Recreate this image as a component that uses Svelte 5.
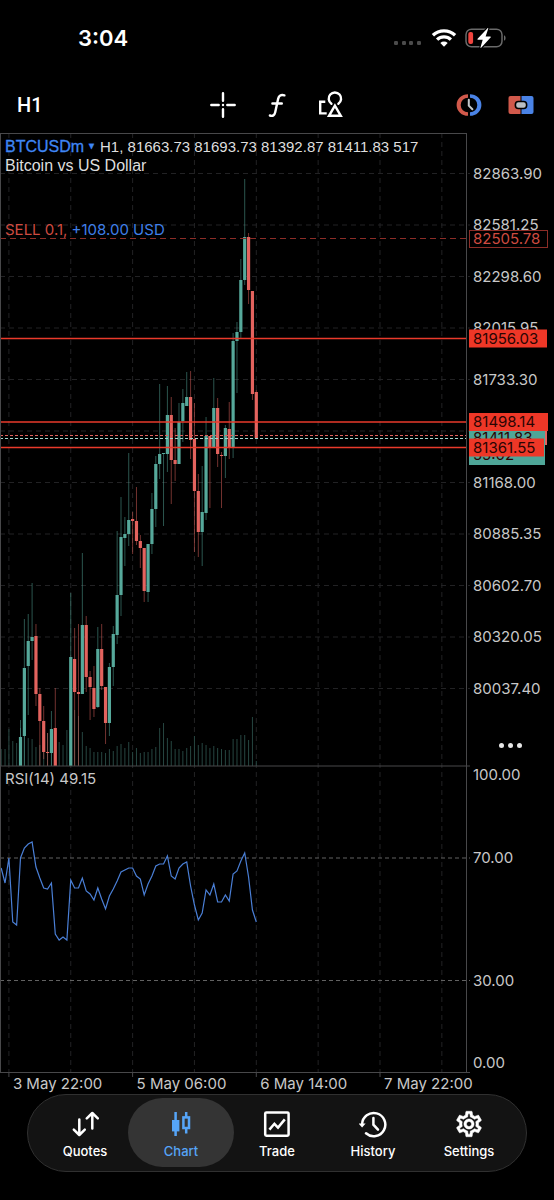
<script>
  const AXIS_WIDTH = 88;
  const TOP = 133;
  const PRICE_BOTTOM = 766;
  const RSI_BOTTOM = 1073;
  const HEIGHT = 961;
  const GRID_STEP = 61.85;
  const BAR_STEP = GRID_STEP / 16;
  const FIRST_GRID = 8.9;

  let width = $state(554);
  let activeTab = $state('Chart');

  let plotWidth = $derived(width - AXIS_WIDTH);
  let gridXs = $derived(
    Array.from(
      { length: Math.ceil((plotWidth - FIRST_GRID) / GRID_STEP) },
      (_, i) => FIRST_GRID + i * GRID_STEP
    )
  );

  const barX = (i) => FIRST_GRID + i * BAR_STEP;

  const tabs = ['Quotes', 'Chart', 'Trade', 'History', 'Settings'];

  const prices = [
    '82863.90', '82581.25', '82298.60', '82015.95', '81733.30', '81450.65',
    '81168.00', '80885.35', '80602.70', '80320.05', '80037.40'
  ].map((label, i) => ({ label, y: 173.5 + i * 51.5 }));

  // the 81450.65 label is always covered by the tags, so only its grid line is drawn
  const priceLabels = prices.filter((p) => p.label !== '81450.65');

  const rsiLevels = [
    { label: '100.00', y: 775 },
    { label: '70.00', y: 858, line: true },
    { label: '30.00', y: 980.5, line: true },
    { label: '0.00', y: 1063 }
  ];

  const times = ['3 May 22:00', '5 May 06:00', '6 May 14:00', '7 May 22:00'];

  const alerts = [
    { label: '81956.03', y: 338.5, w: 78 },
    { label: '81361.55', y: 447.5, w: 75 },
    { label: '81498.14', y: 422, w: 79 }
  ];

  // bar index, high, body top, body bottom, low, rising
  const candles = [
    [3, 720, 737, 766, 766, 1], [4, 619, 668, 736, 766, 1], [5, 614, 641, 666, 715, 1],
    [6, 583, 637, 641, 660, 1], [7, 624, 636, 694, 706, 0], [8, 688, 694, 721, 766, 0],
    [9, 706, 721, 752, 759, 0], [10, 733, 752, 753, 766, 0], [11, 711, 729, 753, 766, 1],
    [12, 688, 728, 766, 766, 0], [16, 593, 657, 766, 766, 1], [17, 628, 659, 692, 766, 0],
    [18, 624, 692, 694, 766, 0], [19, 553, 625, 694, 694, 1], [20, 616, 625, 677, 692, 0],
    [21, 671, 677, 687, 720, 0], [22, 666, 688, 709, 717, 0], [23, 627, 649, 707, 708, 1],
    [24, 624, 649, 686, 690, 0], [25, 687, 687, 723, 744, 0], [26, 663, 667, 723, 736, 1],
    [27, 626, 634, 667, 686, 1], [28, 531, 595, 635, 644, 1], [29, 497, 537, 595, 616, 1],
    [30, 517, 534, 538, 566, 1], [31, 453, 520, 534, 546, 1], [32, 512, 519, 521, 554, 0],
    [33, 487, 521, 541, 545, 0], [34, 535, 541, 548, 568, 0], [35, 548, 548, 591, 602, 0],
    [36, 544, 544, 592, 602, 1], [37, 493, 509, 544, 554, 1], [38, 456, 464, 509, 527, 1],
    [39, 384, 454, 464, 479, 1], [40, 453, 453, 454, 526, 1], [41, 386, 415, 454, 472, 1],
    [42, 397, 415, 460, 504, 0], [43, 428, 460, 464, 481, 0], [44, 403, 422, 464, 464, 1],
    [45, 389, 403, 421, 442, 1], [46, 372, 397, 406, 406, 1], [47, 371, 397, 440, 459, 0],
    [48, 403, 439, 491, 552, 0], [49, 474, 491, 532, 557, 0], [50, 466, 512, 532, 566, 1],
    [51, 417, 436, 513, 520, 1], [52, 436, 436, 448, 508, 0], [53, 378, 408, 448, 448, 1],
    [54, 398, 408, 454, 467, 0], [55, 452, 455, 456, 508, 0], [56, 425, 428, 456, 478, 1],
    [57, 402, 429, 447, 459, 0], [58, 333, 341, 447, 458, 1], [59, 322, 332, 341, 393, 1],
    [60, 259, 280, 332, 338, 1], [61, 179, 237, 280, 285, 1], [62, 233, 237, 290, 304, 0],
    [63, 291, 291, 394, 400, 0], [64, 390, 392, 438, 438, 0]
  ];

  const volumes = [
    17, 17, 37, 25, 23, 38, 36, 28, 27, 19, 21, 16, 33, 18, 24, 24, 21, 36, 38, 56,
    50, 34, 20, 18, 14, 14, 14, 13, 17, 15, 20, 22, 18, 24, 14, 18, 13, 14, 14, 17,
    19, 38, 43, 28, 25, 17, 17, 15, 18, 20, 30, 21, 23, 21, 18, 20, 18, 17, 16, 16,
    27, 27, 31, 31, 26, 49, 5
  ];

  const rsi = [
    868, 883, 858, 922, 925, 858, 848, 844, 842, 867, 878, 888, 889, 883, 934, 940, 937, 940,
    880, 888, 888, 878, 891, 894, 900, 888, 899, 909, 896, 889, 881, 872, 870, 868, 868, 876,
    879, 895, 884, 876, 866, 864, 864, 856, 876, 879, 868, 864, 862, 886, 905, 920, 913, 890,
    895, 884, 902, 902, 895, 901, 874, 871, 861, 853, 877, 910, 922
  ];

  const rsiPoints = rsi.map((y, i) => `${barX(i - 2)},${y}`).join(' ');
</script>

<div class="app">
  <header class="status">
    <span class="clock">3:04</span>
    <div class="indicators">
      <svg width="30" height="20" viewBox="0 0 30 20" aria-hidden="true">
        <g fill="#4b4b4b">
          {#each [1, 9, 16, 24] as x}
            <rect {x} y="13" width="4" height="4" rx="1.3" />
          {/each}
        </g>
      </svg>
      <svg width="26" height="20" viewBox="0 0 26 20" aria-hidden="true">
        <g fill="none" stroke="#fff" stroke-width="3.3">
          <path d="M1.9 7.3a16 16 0 0 1 22.2 0" />
          <path d="M6.1 11.6a10 10 0 0 1 13.8 0" />
        </g>
        <path d="M9.3 15a5.4 5.4 0 0 1 7.4 0L13 18.8z" fill="#fff" />
      </svg>
      <svg class="battery" width="41" height="20" viewBox="0 0 41 20" aria-hidden="true">
        <rect x="1" y="1.2" width="36" height="17.6" rx="5.5" fill="none" stroke="#6a6a6a" stroke-width="1.5" />
        <path d="M39 7.2c2.1.8 2.1 4.8 0 5.6z" fill="#6a6a6a" />
        <rect x="3.3" y="4" width="4.8" height="12" rx="2" fill="#f0443e" />
        <path
          d="M22.3.4 12.6 10.7c-.5.5-.2 1 .4 1h4.7l-2.2 7.5c-.2.8.4 1 .9.4l9.2-10.1c.5-.5.2-1.1-.4-1.1h-4.6L23.2.8c.2-.8-.4-1-.9-.4z"
          fill="#fff" stroke="#000" stroke-width="2.4" paint-order="stroke"
        />
      </svg>
    </div>
  </header>

  <nav class="toolbar" aria-label="Chart tools">
    <button class="timeframe">H1</button>
    <div class="tools">
      <button class="tool" aria-label="Crosshair">
        <svg width="28" height="28" viewBox="0 0 28 28" fill="none" stroke="#fff" stroke-width="2.4" stroke-linecap="round">
          <path d="M14 2.3v7.4M14 18.3v7.4M2.3 14h7.4M18.3 14h7.4" />
          <path d="M14 14h.01" />
        </svg>
      </button>
      <button class="tool" aria-label="Indicators">
        <svg width="28" height="28" viewBox="0 0 28 28" fill="none" stroke="#fff" stroke-width="2.4" stroke-linecap="round" stroke-linejoin="round">
          <path d="M21.4 4.3c-3.5-1-5.5.3-6.3 3.6l-2.9 13.4c-.6 2.9-2.5 4.2-5.3 3.2M9.4 12.5h9.4" />
        </svg>
      </button>
      <button class="tool" aria-label="Objects">
        <svg width="28" height="28" viewBox="0 0 28 28" fill="none" stroke="#fff" stroke-width="2.4">
          <path d="M8.3 10.7H3.2v11.7h6.5" />
          <path d="M14.4 12.8a6.2 6.2 0 1 1 7 0" stroke-linecap="round" />
          <path d="M17.9 14.6 12 24.8h11.8z" />
        </svg>
      </button>
    </div>
    <div class="actions">
      <button class="tool" aria-label="Order timing">
        <svg width="28" height="28" viewBox="0 0 28 28" fill="none">
          <path d="M13 3.2v3.5a7.3 7.3 0 0 0 0 14.6v3.5a11.4 10.8 0 0 1 0-21.6z" fill="#d1594b" />
          <path d="M15 3.2v3.5a7.3 7.3 0 0 1 0 14.6v3.5a11.4 10.8 0 0 0 0-21.6z" fill="#4a83e6" />
          <path d="M13.8 8.7v6l3.6 3.6" stroke="#c3c8cc" stroke-width="2" stroke-linecap="round" />
        </svg>
      </button>
      <button class="tool" aria-label="One click trading">
        <svg width="28" height="28" viewBox="0 0 28 28">
          <path d="M3.5 5h10v18h-10a2 2 0 0 1-2-2V7a2 2 0 0 1 2-2z" fill="#d1594b" />
          <path d="M14.5 5h10a2 2 0 0 1 2 2v14a2 2 0 0 1-2 2h-10z" fill="#4a83e6" />
          <rect x="8.4" y="10.5" width="11.2" height="7" rx="3" fill="#b9bec3" stroke="#000" stroke-width="1.6" />
        </svg>
      </button>
    </div>
  </nav>

  <main class="chart" bind:clientWidth={width}>
    <svg {width} height={HEIGHT} viewBox="0 {TOP} {width} {HEIGHT}" role="img" aria-label="BTCUSDm price chart with RSI">
      <g class="grid">
        {#each gridXs as x}
          <line x1={x} x2={x} y1={TOP} y2={RSI_BOTTOM} />
        {/each}
        {#each prices as p}
          <line x1="0" x2={plotWidth + 4} y1={p.y} y2={p.y} />
        {/each}
      </g>

      <g class="volume">
        {#each volumes as v, i}
          <rect x={barX(i - 2) - 0.5} y={PRICE_BOTTOM - v} width="1" height={v} />
        {/each}
      </g>

      {#each candles as [i, high, top, bottom, low, rising]}
        <g class={rising ? 'up' : 'down'}>
          <rect class="wick" x={barX(i) - 0.5} y={high} width="1" height={low - high} />
          <rect x={barX(i) - 1.6} y={top} width="3.2" height={bottom - top} />
        </g>
      {/each}

      <g class="levels">
        {#each rsiLevels.filter((l) => l.line) as l}
          <line x1="0" x2={plotWidth + 4} y1={l.y} y2={l.y} />
        {/each}
      </g>
      <polyline class="rsi" points={rsiPoints} />

      <line class="position" x1="0" x2={plotWidth} y1="238.5" y2="238.5" />
      <line class="ask" x1="0" x2={plotWidth} y1="435.5" y2="435.5" />
      <line class="bid" x1="0" x2={plotWidth} y1="438.5" y2="438.5" />
      {#each alerts as a}
        <line class="alert" x1="0" x2={plotWidth} y1={a.y} y2={a.y} />
      {/each}

      <g class="frame">
        <line x1="0" x2={plotWidth} y1="133.5" y2="133.5" />
        <line x1="0.5" x2="0.5" y1={TOP} y2={RSI_BOTTOM} />
        <line x1={plotWidth + 0.5} x2={plotWidth + 0.5} y1={TOP} y2={RSI_BOTTOM} />
        <line x1="0" x2={plotWidth + 4} y1={PRICE_BOTTOM} y2={PRICE_BOTTOM} />
        <line x1="0" x2={plotWidth + 4} y1={RSI_BOTTOM - 0.5} y2={RSI_BOTTOM - 0.5} />
        {#each times as _, i}
          <line x1={gridXs[i * 2]} x2={gridXs[i * 2]} y1={RSI_BOTTOM} y2={RSI_BOTTOM + 4} />
        {/each}
      </g>

      <g class="axis">
        {#each [...priceLabels, ...rsiLevels] as p}
          <text x={plotWidth + 7} y={p.y + 5}>{p.label}</text>
        {/each}
        {#each times as t, i}
          <text x={FIRST_GRID + i * 2 * GRID_STEP + 4} y="1089">{t}</text>
        {/each}
      </g>

      <g class="tags">
        <rect class="outline" x={plotWidth + 3.5} y="230.5" width="78" height="17" />
        <text class="outline-text" x={plotWidth + 7} y="244">82505.78</text>
        <rect class="ask-tag" x={plotWidth + 3} y="431" width="78" height="14" />
        <rect class="bid-tag" x={plotWidth + 3} y="431" width="76" height="34" />
        <text x={plotWidth + 7} y="443">81411.83</text>
        <text x={plotWidth + 7} y="460">55:02</text>
        {#each alerts as a}
          <rect class="alert-tag" x={plotWidth + 3} y={a.y - 9} width={a.w} height="18" />
          <text x={plotWidth + 7} y={a.y + 5}>{a.label}</text>
        {/each}
      </g>

      <text class="sell" x="5" y="235">SELL 0.1, <tspan class="profit">+108.00 USD</tspan></text>
      <text class="rsi-title" x="5" y="784">RSI(14) 49.15</text>
    </svg>

    <div class="legend">
      <div class="quote">
        <button class="symbol">BTCUSDm <span class="caret">▼</span></button>
        <span class="ohlc">H1, 81663.73 81693.73 81392.87 81411.83 517</span>
      </div>
      <div class="description">Bitcoin vs US Dollar</div>
    </div>
    <button class="more" aria-label="More">
      <span></span><span></span><span></span>
    </button>
  </main>

  <nav class="tabs" aria-label="Main">
    {#each tabs as tab}
      <button class="tab" class:active={activeTab === tab} onclick={() => (activeTab = tab)}>
        <svg width="28" height="28" viewBox="0 0 28 28" fill="none" stroke="currentColor" stroke-width="2.5" aria-hidden="true">
          {#if tab === 'Quotes'}
            <g stroke-linecap="round" stroke-linejoin="round">
              <path d="M8.3 9.6v15M2.8 19.6l5.5 5.4 5.5-5.4" />
              <path d="M21.3 18.4v-15M15.8 8.4 21.3 3l5.5 5.4" />
            </g>
          {:else if tab === 'Chart'}
            <path d="M8.6 2v24M19.2 2v5M19.2 19v4.5" />
            <rect x="5" y="10" width="7.4" height="11.4" fill="currentColor" stroke="none" />
            <rect x="16.4" y="7.4" width="5.6" height="10.6" />
          {:else if tab === 'Trade'}
            <rect x="2.2" y="2.4" width="23.4" height="23.4" rx="1.2" />
            <path d="m6.4 19.6 5-5.8 3.6 3.8 6.8-8.2" />
          {:else if tab === 'History'}
            <path d="M3.1 14.3A11.6 11.6 0 1 1 7 23.3" stroke-linecap="round" />
            <path d="M-.4 13.6h7l-3.5 4z" fill="currentColor" stroke="none" />
            <path d="M14.4 8v6.7l4.6 5" stroke-linecap="round" />
          {:else}
            <svg viewBox="1 1 22 22" width="28" height="28">
              <path
                stroke-width="0.4"
                fill="currentColor"
                d="M19.43 12.98c.04-.32.07-.64.07-.98 0-.34-.03-.66-.07-.98l2.11-1.65c.19-.15.24-.42.12-.64l-2-3.46c-.09-.16-.26-.25-.44-.25-.06 0-.12.01-.17.03l-2.49 1c-.52-.4-1.08-.73-1.69-.98l-.38-2.65C14.46 2.18 14.25 2 14 2h-4c-.25 0-.46.18-.49.42l-.38 2.65c-.61.25-1.17.59-1.69.98l-2.49-1c-.06-.02-.12-.03-.18-.03-.17 0-.34.09-.43.25l-2 3.46c-.13.22-.07.49.12.64l2.11 1.65c-.04.32-.07.65-.07.98 0 .33.03.66.07.98l-2.11 1.65c-.19.15-.24.42-.12.64l2 3.46c.09.16.26.25.44.25.06 0 .12-.01.17-.03l2.49-1c.52.4 1.08.73 1.69.98l.38 2.65c.03.24.24.42.49.42h4c.25 0 .46-.18.49-.42l.38-2.65c.61-.25 1.17-.59 1.69-.98l2.49 1c.06.02.12.03.18.03.17 0 .34-.09.43-.25l2-3.46c.12-.22.07-.49-.12-.64l-2.11-1.65zm-1.98-1.71c.04.31.05.52.05.73 0 .21-.02.43-.05.73l-.14 1.13.89.7 1.08.84-.7 1.21-1.27-.51-1.04-.42-.9.68c-.43.32-.84.56-1.25.73l-1.06.43-.16 1.13-.2 1.35h-1.4l-.19-1.35-.16-1.13-1.06-.43c-.43-.18-.83-.41-1.23-.71l-.91-.7-1.06.43-1.27.51-.7-1.21 1.08-.84.89-.7-.14-1.13c-.03-.31-.05-.54-.05-.74s.02-.43.05-.73l.14-1.13-.89-.7-1.08-.84.7-1.21 1.27.51 1.04.42.9-.68c.43-.32.84-.56 1.25-.73l1.06-.43.16-1.13.2-1.35h1.39l.19 1.35.16 1.13 1.06.43c.43.18.83.41 1.23.71l.91.7 1.06-.43 1.27-.51.7 1.21-1.07.85-.89.7.14 1.13zM12 8c-2.21 0-4 1.79-4 4s1.79 4 4 4 4-1.79 4-4-1.79-4-4-4zm0 6c-1.1 0-2-.9-2-2s.9-2 2-2 2 .9 2 2-.9 2-2 2z"
              />
            </svg>
          {/if}
        </svg>
        <span>{tab}</span>
      </button>
    {/each}
  </nav>
</div>

<style>
  :global(body) {
    background: #000;
  }

  .app {
    display: flex;
    flex-direction: column;
    min-height: 100vh;
    background: #000;
    color: #fff;
    font-family: Inter, sans-serif;
  }

  button {
    padding: 0;
    border: none;
    background: none;
    color: inherit;
    font-family: inherit;
    cursor: pointer;
  }

  .status {
    display: flex;
    align-items: center;
    justify-content: space-between;
    height: 76px;
    padding: 0 48px 0 78px;
  }

  .clock {
    font-size: 22px;
    font-weight: 600;
    line-height: 28px;
  }

  .indicators {
    display: flex;
    align-items: center;
    gap: 8px;
  }

  .toolbar {
    display: grid;
    grid-template-columns: 1fr auto 1fr;
    align-items: center;
    height: 57px;
    padding: 0 7px;
  }

  .timeframe {
    justify-self: start;
    padding-left: 10px;
    font-family: Roboto, sans-serif;
    font-size: 20px;
    font-weight: 500;
  }

  .tools,
  .actions {
    display: flex;
  }

  .actions {
    justify-content: flex-end;
  }

  .tool {
    display: flex;
    align-items: center;
    justify-content: center;
    width: 54px;
    height: 44px;
  }

  .actions .tool {
    width: 52px;
  }

  .chart {
    position: relative;
  }

  .chart > svg {
    display: block;
  }

  .grid line {
    stroke: #222224;
    stroke-dasharray: 5 4;
  }

  .volume {
    fill: #264641;
  }

  .up {
    fill: #56a99b;
  }

  .down {
    fill: #e3635e;
  }

  .wick {
    opacity: 0.5;
  }

  .levels line {
    stroke: #626262;
    stroke-dasharray: 4 3;
  }

  .rsi {
    fill: none;
    stroke: #4a7fd6;
    stroke-width: 1.2;
  }

  .position {
    stroke: #8c2d27;
    stroke-dasharray: 6 4;
  }

  .ask {
    stroke: #e3635e;
    stroke-dasharray: 3 2;
  }

  .bid {
    stroke: #a5d8cf;
    stroke-dasharray: 3 2;
  }

  .alert {
    stroke: #e93a2b;
    stroke-width: 1.4;
  }

  .frame line {
    stroke: #48484a;
  }

  .axis text,
  .tags text,
  .sell,
  .rsi-title {
    font-size: 15px;
  }

  .axis text,
  .rsi-title {
    fill: #c8c8c8;
  }

  .tags text {
    fill: #2a0503;
  }

  .tags .outline {
    fill: #000;
    stroke: #8c2d27;
  }

  .tags .outline-text {
    fill: #cf4b40;
  }

  .alert-tag {
    fill: #ee3727;
  }

  .ask-tag {
    fill: #e3635e;
  }

  .bid-tag {
    fill: #4fa698;
  }

  .sell {
    fill: #cf4b40;
  }

  .profit {
    fill: #3f7fe8;
  }

  .legend {
    position: absolute;
    top: 4px;
    left: 5px;
    color: #dedede;
    font-family: 'Liberation Sans', sans-serif;
    font-size: 16px;
    line-height: 19px;
  }

  .quote {
    display: flex;
    gap: 4px;
    white-space: nowrap;
  }

  .symbol {
    display: flex;
    gap: 3px;
    color: #3f86f5;
    font-size: 16px;
    line-height: 19px;
    -webkit-text-stroke: 0.3px #3f86f5;
  }

  .caret {
    font-size: 9px;
  }

  .ohlc {
    font-size: 15px;
  }

  .more {
    position: absolute;
    top: 600px;
    right: 32px;
    display: flex;
    gap: 4px;
    padding: 10px 0;
  }

  .more span {
    width: 5px;
    height: 5px;
    border-radius: 50%;
    background: #e6e6e6;
  }

  .tabs {
    display: grid;
    grid-template-columns: repeat(5, 1fr);
    margin: 0 27px;
    padding: 3px 9px 4px;
    border: 1px solid #303030;
    border-radius: 40px;
    background: #131313;
  }

  .tab {
    display: flex;
    flex-direction: column;
    align-items: center;
    gap: 4px;
    margin: 0 -5px;
    padding: 12px 0 7px;
    border-radius: 36px;
    font-size: 13px;
    font-weight: 500;
    line-height: 18px;
  }

  .tab.active {
    background: #343434;
    color: #56a5f8;
  }
</style>
